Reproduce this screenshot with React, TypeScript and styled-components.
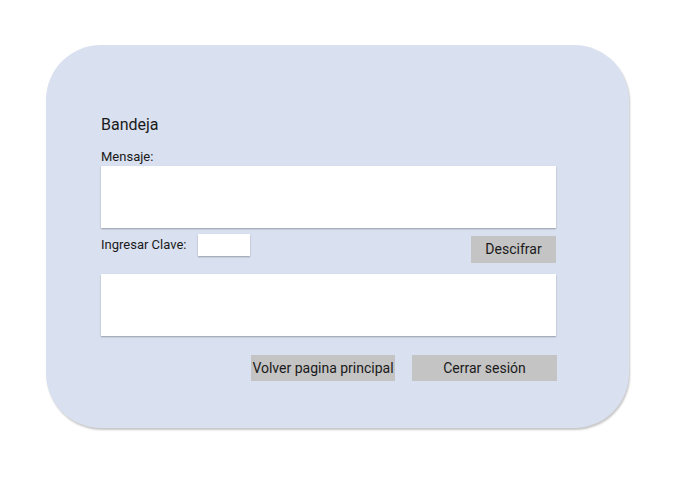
import React from "react";
import styled, { createGlobalStyle } from "styled-components";

const Global = createGlobalStyle`
  html, body { margin: 0; padding: 0; background: #ffffff; }
  body { font-family: Roboto, "Liberation Sans", sans-serif; color: #1a1a1a; }
  * { box-sizing: border-box; }
`;

const Page = styled.div`
  width: 675px;
  height: 479px;
  padding: 45px 0 0 46px;
`;

const Card = styled.div`
  width: 583px;
  height: 383px;
  border-radius: 55px;
  background: #d9e0ef;
  box-shadow: 1px 2px 2px rgba(0, 0, 0, 0.22);
  padding: 70px 73px 0 55px;
  display: flex;
  flex-direction: column;
`;

const Title = styled.div`
  font-size: 16px;
  line-height: 19px;
  height: 19px;
`;

const Label = styled.div<{ $top?: number }>`
  font-size: 13px;
  line-height: 15px;
  margin-top: ${(p) => p.$top ?? 0}px;
  white-space: nowrap;
`;

const TextBox = styled.div<{ $top: number }>`
  margin-top: ${(p) => p.$top}px;
  height: 62px;
  width: 100%;
  background: #ffffff;
  box-shadow: 0 1px 1.5px rgba(0, 0, 0, 0.3);
`;

const KeyRow = styled.div`
  margin-top: 6px;
  display: flex;
  align-items: flex-start;
`;

const KeyInput = styled.div`
  width: 52px;
  height: 22px;
  margin-left: 12px;
  background: #ffffff;
  box-shadow: 0 1px 1.5px rgba(0, 0, 0, 0.3);
`;

const Button = styled.div<{ $w: number }>`
  width: ${(p) => p.$w}px;
  height: 27px;
  background: #c4c4c4;
  font-size: 14px;
  line-height: 27px;
  text-align: center;
  white-space: nowrap;
  color: #1a1a1a;
`;

const DecodeButton = styled(Button)`
  margin-left: auto;
  margin-top: 2px;
`;

const ActionRow = styled.div`
  margin-top: 19px;
  display: flex;
  justify-content: flex-end;
  gap: 17px;
  margin-right: -1px;
`;

const ActionButton = styled(Button)`
  height: 26px;
  line-height: 26px;
`;

export default function App() {
  return (
    <>
      <Global />
      <Page>
        <Card>
          <Title>Bandeja</Title>
          <Label $top={15}>Mensaje:</Label>
          <TextBox $top={2} />
          <KeyRow>
            <Label $top={3}>Ingresar Clave:</Label>
            <KeyInput />
            <DecodeButton $w={85}>Descifrar</DecodeButton>
          </KeyRow>
          <TextBox $top={11} />
          <ActionRow>
            <ActionButton $w={144}>Volver pagina principal</ActionButton>
            <ActionButton $w={145}>Cerrar sesión</ActionButton>
          </ActionRow>
        </Card>
      </Page>
    </>
  );
}
